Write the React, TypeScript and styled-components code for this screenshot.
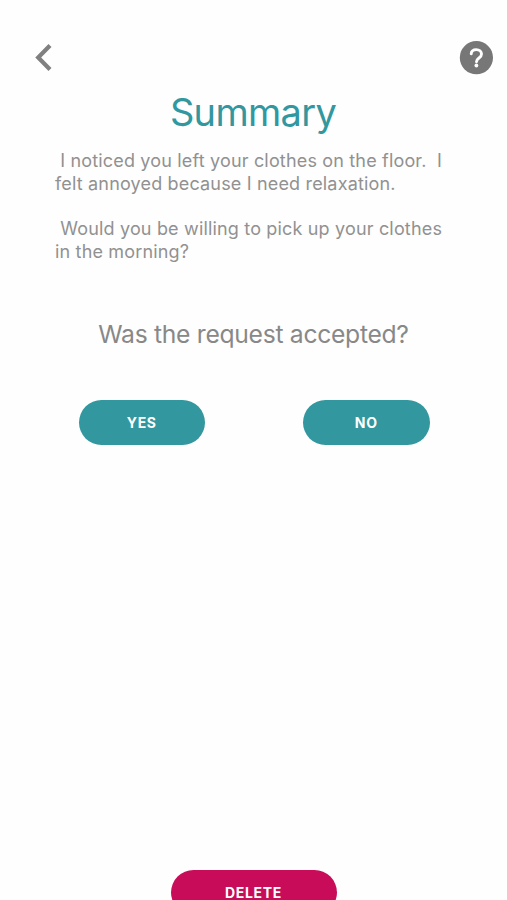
import React from "react";
import styled, { createGlobalStyle } from "styled-components";

const GlobalStyle = createGlobalStyle`
  * { box-sizing: border-box; }
  body { margin: 0; background: #fefefe; overflow: hidden; font-family: Inter, sans-serif; }
`;
const Screen = styled.main`
  width: 507px;
  height: 900px;
  overflow: hidden;
  display: flex;
  flex-direction: column;
  background: #fefefe;
`;
const TopBar = styled.header`
  height: 74px;
  padding: 41px 14px 0 35px;
  display: flex;
  justify-content: space-between;
  align-items: flex-start;
`;
const IconButton = styled.button`
  display: flex;
  border: 0;
  padding: 0;
  background: none;
`;
const Title = styled.h1`
  margin: 13px 0 0;
  padding-right: 1px;
  height: 50px;
  line-height: 50px;
  text-align: center;
  font-size: 38px;
  font-weight: 400;
  letter-spacing: -0.7px;
  color: #32979e;
`;
const Message = styled.section`
  margin: 12px 0 0 55px;
  display: flex;
  flex-direction: column;
  gap: 22px;
  color: #919191;
`;
const Line = styled.span`
  display: block;
  height: 23px;
  line-height: 23px;
  font-size: 18px;
  white-space: pre;
  letter-spacing: 0.17px;
`;
const Paragraph = styled.p`
  margin: 0;
`;
const Question = styled.h2`
  margin: 51px 0 0;
  height: 40px;
  line-height: 40px;
  text-align: center;
  font-size: 24.7px;
  font-weight: 400;
  letter-spacing: -0.3px;
  color: #888;
`;
const Answers = styled.div`
  margin: 46px 77.5px 0 78.5px;
  display: flex;
  justify-content: space-between;
`;
const Pill = styled.button<{ $width: number; $color: string }>`
  width: ${(p) => p.$width}px;
  height: 45px;
  flex: none;
  border: 0;
  padding: 0;
  border-radius: 23px;
  background: ${(p) => p.$color};
  color: #fff;
  font: 700 14px/45px Inter, sans-serif;
  letter-spacing: 0.7px;
`;
const Footer = styled.footer`
  margin-top: 425px;
  display: flex;
  justify-content: center;
`;

export default function App() {
  return (
    <>
      <GlobalStyle />
      <Screen>
        <TopBar>
          <IconButton aria-label="Back">
            <svg width="18" height="33" viewBox="0 0 18 33">
              <path d="M15 4.5 3.2 16.5l11.8 12" fill="none" stroke="#808080" strokeWidth="4.2" />
            </svg>
          </IconButton>
          <IconButton aria-label="Help">
            <svg width="34" height="34" viewBox="0 0 34 34">
              <circle cx="17.4" cy="16.7" r="16.6" fill="#777" />
              <path
                d="M12.2 12.8c.2-2.6 2.2-4.2 5.1-4.2 3 0 5.2 1.8 5.2 4.4 0 1.8-.9 2.9-2.5 4-1.8 1.3-2.5 2-2.5 3.8"
                fill="none"
                stroke="#fff"
                strokeWidth="2.9"
                strokeLinecap="round"
              />
              <circle cx="17.4" cy="24.5" r="1.9" fill="#fff" />
            </svg>
          </IconButton>
        </TopBar>
        <Title>Summary</Title>
        <Message>
          <Paragraph>
            <Line>{" I noticed you left your clothes on the floor.  I"}</Line>
            <Line>felt annoyed because I need relaxation.</Line>
          </Paragraph>
          <Paragraph>
            <Line>{" Would you be willing to pick up your clothes"}</Line>
            <Line>in the morning?</Line>
          </Paragraph>
        </Message>
        <Question>Was the request accepted?</Question>
        <Answers>
          <Pill $width={126.5} $color="#32979e">YES</Pill>
          <Pill $width={126.5} $color="#32979e">NO</Pill>
        </Answers>
        <Footer>
          <Pill $width={166} $color="#c90c5a">DELETE</Pill>
        </Footer>
      </Screen>
    </>
  );
}
